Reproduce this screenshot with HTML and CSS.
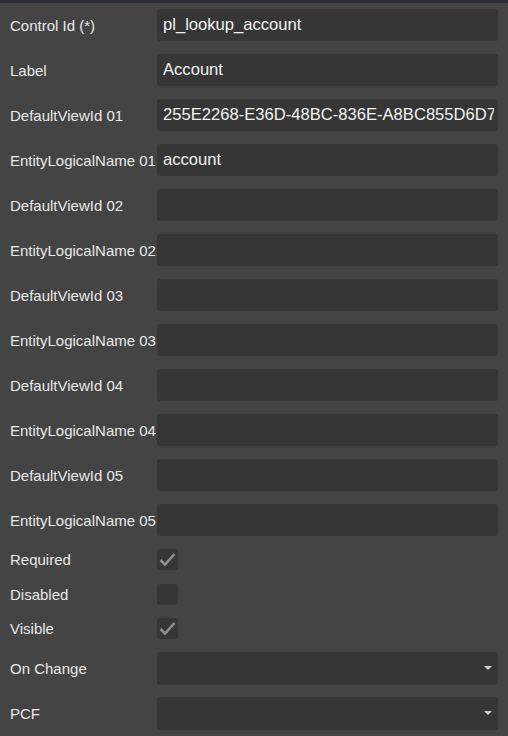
FILE: index.html
```html
<!DOCTYPE html>
<html>
<head>
<meta charset="utf-8">
<link rel="stylesheet" href="styles.css">
</head>
<body>
<div class="topbar"></div>
<div class="form">
  <label class="lbl">Control Id (*)</label>
  <input class="field" type="text" value="pl_lookup_account">
  <label class="lbl">Label</label>
  <input class="field" type="text" value="Account">
  <label class="lbl">DefaultViewId 01</label>
  <input class="field" type="text" value="255E2268-E36D-48BC-836E-A8BC855D6D7A">
  <label class="lbl">EntityLogicalName 01</label>
  <input class="field" type="text" value="account">
  <label class="lbl">DefaultViewId 02</label>
  <input class="field" type="text" value="">
  <label class="lbl">EntityLogicalName 02</label>
  <input class="field" type="text" value="">
  <label class="lbl">DefaultViewId 03</label>
  <input class="field" type="text" value="">
  <label class="lbl">EntityLogicalName 03</label>
  <input class="field" type="text" value="">
  <label class="lbl">DefaultViewId 04</label>
  <input class="field" type="text" value="">
  <label class="lbl">EntityLogicalName 04</label>
  <input class="field" type="text" value="">
  <label class="lbl">DefaultViewId 05</label>
  <input class="field" type="text" value="">
  <label class="lbl">EntityLogicalName 05</label>
  <input class="field" type="text" value="">

  <label class="lbl">Required</label>
  <div class="checkbox"><svg viewBox="0 0 21 21" width="21" height="21"><path d="M3.5 11 L8 15.5 L17.5 5" fill="none" stroke="#8e8e8e" stroke-width="2.6"/></svg></div>
  <label class="lbl">Disabled</label>
  <div class="checkbox"></div>
  <label class="lbl">Visible</label>
  <div class="checkbox"><svg viewBox="0 0 21 21" width="21" height="21"><path d="M3.5 11 L8 15.5 L17.5 5" fill="none" stroke="#8e8e8e" stroke-width="2.6"/></svg></div>

  <label class="lbl">On Change</label>
  <div class="select"><span class="arrow"></span></div>
  <label class="lbl">PCF</label>
  <div class="select"><span class="arrow"></span></div>
</div>
</body>
</html>
```
FILE: styles.css
```css
html, body {
  margin: 0;
  padding: 0;
  background: #444444;
  height: 100%;
  overflow: hidden;
}
body {
  font-family: "Liberation Sans", Arial, sans-serif;
}
.topbar {
  height: 3px;
  background: #2c2f36;
}
.form {
  display: grid;
  grid-template-columns: 147px 341px;
  grid-template-rows: repeat(12, 32px) repeat(3, 21.5px) repeat(2, 32px);
  row-gap: 13px;
  padding: 6px 0 0 10px;
  align-items: center;
}
.lbl {
  font-size: 15px;
  color: #e8e8e8;
  white-space: nowrap;
}
.field {
  box-sizing: border-box;
  width: 341px;
  height: 32px;
  border: none;
  outline: none;
  border-radius: 3px;
  background: #363636;
  color: #f2f2f2;
  font-family: "Liberation Sans", Arial, sans-serif;
  font-size: 16.6px;
  padding: 0 4px 0 6px;
  margin: 0;
}
.checkbox {
  width: 21px;
  height: 21px;
  border-radius: 3px;
  background: #363636;
}
.checkbox svg {
  display: block;
}
.select {
  position: relative;
  box-sizing: border-box;
  width: 341px;
  height: 33px;
  border-radius: 3px;
  background: #363636;
}
.arrow {
  position: absolute;
  right: 6px;
  top: 14px;
  width: 0;
  height: 0;
  border-left: 4px solid transparent;
  border-right: 4px solid transparent;
  border-top: 4px solid #cfcfcf;
}
```
